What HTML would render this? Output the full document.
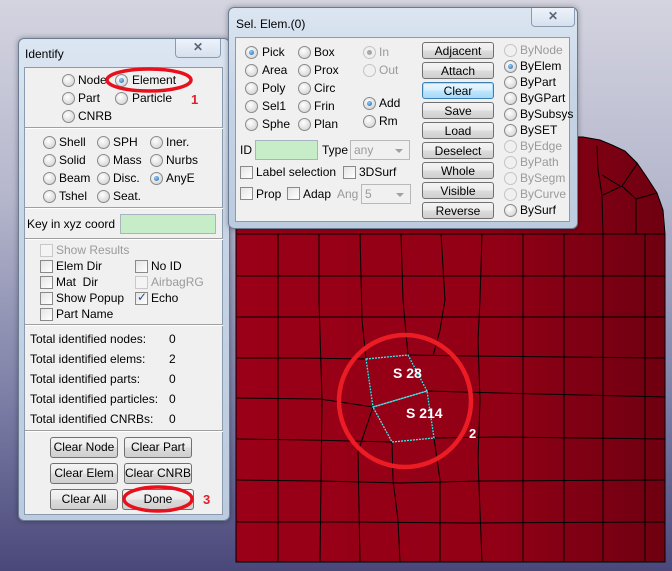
<!DOCTYPE html>
<html><head><meta charset="utf-8"><style>
*{margin:0;padding:0;box-sizing:border-box}
body{width:672px;height:571px;overflow:hidden;position:relative;font-family:"Liberation Sans",sans-serif;font-size:12px;color:#000;background:linear-gradient(180deg,#d4d4e0 0%,#b4b6cc 35%,#7c7ea6 70%,#4a487a 100%)}
.a{position:absolute;white-space:nowrap}
.win{position:absolute;border:1px solid #6b7c92;border-radius:6px;background:linear-gradient(180deg,#dce6f2,#c6d4e6 40%,#bccbdf);box-shadow:0 0 6px rgba(0,0,0,.35)}
.client{position:absolute;background:#f0f0f0;border:1px solid #8a9bb0}
.close{position:absolute;border:1px solid #8a9bb0;border-top:none;border-radius:0 0 4px 4px;background:linear-gradient(180deg,#eef3fa,#d6e1ee);color:#5a6678;font-weight:bold;font-size:12px;text-align:center;line-height:17px}
.r{position:absolute;width:13px;height:13px;border-radius:50%;border:1px solid #8a8a8a;background:radial-gradient(circle at 40% 35%,#fff,#e0e0e0 60%,#c8c8c8)}
.r.on::after{content:"";position:absolute;left:3px;top:3px;width:5px;height:5px;border-radius:50%;background:radial-gradient(circle at 40% 35%,#8fd0ff,#1c5fa8)}
.r.dis{border-color:#c4c4c4;background:#f0f0f0}
.r.dison::after{content:"";position:absolute;left:3px;top:3px;width:5px;height:5px;border-radius:50%;background:#a8a8a8}
.c{position:absolute;width:13px;height:13px;border:1px solid #8a8a8a;background:linear-gradient(135deg,#e4e4e4,#fff)}
.c.dis{border-color:#c8c8c8;background:#f4f4f4}
.t{position:absolute;white-space:nowrap;line-height:14px}
.g{color:#9a9a9a}
.sep{position:absolute;height:2px;border-top:1px solid #a0a0a0;border-bottom:1px solid #fff}
.b{position:absolute;border:1px solid #707070;border-radius:3px;background:linear-gradient(180deg,#f4f4f4 0%,#ebebeb 48%,#dcdcdc 52%,#cfcfcf 100%);text-align:center;line-height:16px;font-size:12px}
.b.f{border-color:#3c7fb1;background:linear-gradient(180deg,#eaf6fd 0%,#d9f0fc 48%,#bee6fd 52%,#a7d9f5 100%);box-shadow:inset 0 0 0 1px #9fe0ff}
.in{position:absolute;background:#c6ecc8;border:1px solid #a8b4c0}
.combo{position:absolute;border:1px solid #b8b8b8;background:#f0f0f0;color:#9a9a9a;padding-left:3px;line-height:18px}
.combo::after{content:"";position:absolute;right:6px;top:8px;border:4px solid transparent;border-top:4px solid #a0a0a0}
</style></head><body>

<svg class="a" style="left:0;top:0" width="672" height="571">
<defs><linearGradient id="m" x1="0" x2="1" y1="0" y2="0"><stop offset="0" stop-color="#9a0018"/><stop offset="0.6" stop-color="#920016"/><stop offset="1" stop-color="#6e0010"/></linearGradient></defs>
<path d="M236,133 L583,137 L600,140 L612,145 L625,151 L637,163 L646,176 L657,193 L663,210 L665,234 L665,562 L236,562 Z" fill="url(#m)" stroke="#000" stroke-width="1"/>
<g stroke="#000" stroke-width="1" fill="none">
<path d="M237,234H665M237,276H665M237,317H665"/>
<path d="M237,358 L300,358 L366,359 M408,355 L470,356 L665,358"/>
<path d="M237,398 L320,399 L373,407 M427,391 L500,393 L665,397"/>
<path d="M237,439 L310,440 L392,442 M434,438 L500,437 L665,439"/>
<path d="M237,480 L320,481 L400,483 L480,481 L665,480"/>
<path d="M237,522 L360,522 L470,523 L665,522"/>
<path d="M278,234V562M319,234 L319,300 L322,400 L320,562"/>
<path d="M360,234 L362,320 L366,359 L373,407 L358,452 L360,562"/>
<path d="M401,234 L403,300 L408,355 L427,391 L434,438 L440,480 L440,562"/>
<path d="M441,234 L445,300 L440,330 L433,356 M392,442 L393,480 L398,520 L400,562"/>
<path d="M482,234 L480,300 L478,340 L480,400 L478,460 L482,562"/>
<path d="M523,234V562M564,234V562M603,234V562"/>
<path d="M603,234 L602,195 L598,170 L597,146 M603,195 L622,186 L637,164 M602,175 L620,186"/>
<path d="M636,234 L636,199 L622,186 M636,199 L657,193 M645,234V562"/>
</g>
<g stroke="#3fe8e8" stroke-width="1.3" fill="none" stroke-dasharray="2,1">
<path d="M366,359 L408,355 L427,391 L373,407 Z"/>
<path d="M373,407 L427,391 L434,438 L392,442 Z"/>
</g>
<circle cx="405" cy="401" r="66" fill="none" stroke="#ec1c24" stroke-width="4.5"/>
<text x="393" y="378" fill="#fff" font-family="Liberation Sans" font-weight="bold" font-size="14">S 28</text>
<text x="406" y="418" fill="#fff" font-family="Liberation Sans" font-weight="bold" font-size="14">S 214</text>
<text x="469" y="438" fill="#fff" font-family="Liberation Sans" font-weight="bold" font-size="13">2</text>
</svg>

<div class="win" style="left:18px;top:38px;width:212px;height:483px">
<div class="close" style="left:156px;top:0;width:46px;height:19px">✕</div>
<div class="t" style="left:6px;top:8px;font-size:12px">Identify</div>
<div class="client" style="left:5px;top:28px;width:199px;height:448px"></div>
</div>
<div class="r" style="left:62px;top:74px"></div><div class="t" style="left:78px;top:73px">Node</div>
<div class="r on" style="left:115px;top:74px"></div><div class="t" style="left:132px;top:73px">Element</div>
<div class="r" style="left:62px;top:92px"></div><div class="t" style="left:78px;top:91px">Part</div>
<div class="r" style="left:115px;top:92px"></div><div class="t" style="left:132px;top:91px">Particle</div>
<div class="r" style="left:62px;top:110px"></div><div class="t" style="left:78px;top:109px">CNRB</div>
<svg class="a" style="left:104px;top:66px" width="92" height="30"><ellipse cx="45" cy="14" rx="42" ry="11" fill="none" stroke="#e8101c" stroke-width="3.5"/></svg>
<div class="t" style="left:191px;top:93px;color:#e0202a;font-weight:bold;font-size:13px">1</div>
<div class="sep" style="left:25px;top:127px;width:198px"></div>
<div class="r" style="left:43px;top:136px"></div><div class="t" style="left:59px;top:135px">Shell</div>
<div class="r" style="left:97px;top:136px"></div><div class="t" style="left:113px;top:135px">SPH</div>
<div class="r" style="left:150px;top:136px"></div><div class="t" style="left:166px;top:135px">Iner.</div>
<div class="r" style="left:43px;top:154px"></div><div class="t" style="left:59px;top:153px">Solid</div>
<div class="r" style="left:97px;top:154px"></div><div class="t" style="left:113px;top:153px">Mass</div>
<div class="r" style="left:150px;top:154px"></div><div class="t" style="left:166px;top:153px">Nurbs</div>
<div class="r" style="left:43px;top:172px"></div><div class="t" style="left:59px;top:171px">Beam</div>
<div class="r" style="left:97px;top:172px"></div><div class="t" style="left:113px;top:171px">Disc.</div>
<div class="r on" style="left:150px;top:172px"></div><div class="t" style="left:166px;top:171px">AnyE</div>
<div class="r" style="left:43px;top:190px"></div><div class="t" style="left:59px;top:189px">Tshel</div>
<div class="r" style="left:97px;top:190px"></div><div class="t" style="left:113px;top:189px">Seat.</div>
<div class="sep" style="left:25px;top:207px;width:198px"></div>
<div class="t" style="left:27px;top:217px">Key in xyz coord</div>
<div class="in" style="left:120px;top:214px;width:96px;height:20px"></div>
<div class="sep" style="left:25px;top:238px;width:198px"></div>
<div class="c dis" style="left:40px;top:244px"></div><div class="t g" style="left:56px;top:243px">Show Results</div>
<div class="c" style="left:40px;top:260px"></div><div class="t" style="left:56px;top:259px">Elem Dir</div>
<div class="c" style="left:135px;top:260px"></div><div class="t" style="left:151px;top:259px">No ID</div>
<div class="c" style="left:40px;top:276px"></div><div class="t" style="left:56px;top:275px">Mat&nbsp; Dir</div>
<div class="c dis" style="left:135px;top:276px"></div><div class="t g" style="left:151px;top:275px">AirbagRG</div>
<div class="c" style="left:40px;top:292px"></div><div class="t" style="left:56px;top:291px">Show Popup</div>
<div class="c" style="left:135px;top:292px"></div><div class="t" style="left:137px;top:290px;font-size:12px;color:#2a4a8a">✓</div><div class="t" style="left:151px;top:291px">Echo</div>
<div class="c" style="left:40px;top:308px"></div><div class="t" style="left:56px;top:307px">Part Name</div>
<div class="sep" style="left:25px;top:324px;width:198px"></div>
<div class="t" style="left:30px;top:332px">Total identified nodes:</div><div class="t" style="left:169px;top:332px">0</div>
<div class="t" style="left:30px;top:352px">Total identified elems:</div><div class="t" style="left:169px;top:352px">2</div>
<div class="t" style="left:30px;top:372px">Total identified parts:</div><div class="t" style="left:169px;top:372px">0</div>
<div class="t" style="left:30px;top:392px">Total identified particles:</div><div class="t" style="left:169px;top:392px">0</div>
<div class="t" style="left:30px;top:412px">Total identified CNRBs:</div><div class="t" style="left:169px;top:412px">0</div>
<div class="sep" style="left:25px;top:430px;width:198px"></div>
<div class="b" style="left:50px;top:437px;width:68px;height:21px;line-height:19px">Clear Node</div>
<div class="b" style="left:124px;top:437px;width:68px;height:21px;line-height:19px">Clear Part</div>
<div class="b" style="left:50px;top:463px;width:68px;height:21px;line-height:19px">Clear Elem</div>
<div class="b" style="left:124px;top:463px;width:68px;height:21px;line-height:19px">Clear CNRB</div>
<div class="b" style="left:50px;top:489px;width:68px;height:21px;line-height:19px">Clear All</div>
<div class="b" style="left:122px;top:489px;width:72px;height:21px;line-height:19px">Done</div>
<svg class="a" style="left:120px;top:483px" width="80" height="34"><ellipse cx="38" cy="16" rx="34" ry="12" fill="none" stroke="#e8101c" stroke-width="3.5"/></svg>
<div class="t" style="left:203px;top:493px;color:#e0202a;font-weight:bold;font-size:13px">3</div>

<div class="win" style="left:228px;top:7px;width:350px;height:222px">
<div class="close" style="left:302px;top:0;width:44px;height:19px">✕</div>
<div class="t" style="left:7px;top:9px">Sel. Elem.(0)</div>
<div class="client" style="left:6px;top:29px;width:335px;height:185px"></div>
</div>
<div class="r on" style="left:245px;top:46px"></div><div class="t" style="left:262px;top:45px">Pick</div>
<div class="r" style="left:245px;top:64px"></div><div class="t" style="left:262px;top:63px">Area</div>
<div class="r" style="left:245px;top:82px"></div><div class="t" style="left:262px;top:81px">Poly</div>
<div class="r" style="left:245px;top:100px"></div><div class="t" style="left:262px;top:99px">Sel1</div>
<div class="r" style="left:245px;top:118px"></div><div class="t" style="left:262px;top:117px">Sphe</div>
<div class="r" style="left:298px;top:46px"></div><div class="t" style="left:314px;top:45px">Box</div>
<div class="r" style="left:298px;top:64px"></div><div class="t" style="left:314px;top:63px">Prox</div>
<div class="r" style="left:298px;top:82px"></div><div class="t" style="left:314px;top:81px">Circ</div>
<div class="r" style="left:298px;top:100px"></div><div class="t" style="left:314px;top:99px">Frin</div>
<div class="r" style="left:298px;top:118px"></div><div class="t" style="left:314px;top:117px">Plan</div>
<div class="r dis dison" style="left:363px;top:46px"></div><div class="t g" style="left:379px;top:45px">In</div>
<div class="r dis" style="left:363px;top:64px"></div><div class="t g" style="left:379px;top:63px">Out</div>
<div class="r on" style="left:363px;top:97px"></div><div class="t" style="left:379px;top:96px">Add</div>
<div class="r" style="left:363px;top:115px"></div><div class="t" style="left:379px;top:114px">Rm</div>
<div class="t" style="left:240px;top:143px">ID</div>
<div class="in" style="left:255px;top:140px;width:63px;height:20px"></div>
<div class="t" style="left:322px;top:143px">Type</div>
<div class="combo" style="left:350px;top:140px;width:60px;height:20px">any</div>
<div class="c" style="left:240px;top:166px"></div><div class="t" style="left:256px;top:165px">Label selection</div>
<div class="c" style="left:343px;top:166px"></div><div class="t" style="left:359px;top:165px">3DSurf</div>
<div class="c" style="left:240px;top:187px"></div><div class="t" style="left:256px;top:187px">Prop</div>
<div class="c" style="left:287px;top:187px"></div><div class="t" style="left:303px;top:187px">Adap</div>
<div class="t g" style="left:337px;top:187px">Ang</div>
<div class="combo" style="left:361px;top:184px;width:50px;height:20px">5</div>
<div class="b" style="left:422px;top:42px;width:72px;height:17px">Adjacent</div>
<div class="b" style="left:422px;top:62px;width:72px;height:17px">Attach</div>
<div class="b f" style="left:422px;top:82px;width:72px;height:17px">Clear</div>
<div class="b" style="left:422px;top:102px;width:72px;height:17px">Save</div>
<div class="b" style="left:422px;top:122px;width:72px;height:17px">Load</div>
<div class="b" style="left:422px;top:142px;width:72px;height:17px">Deselect</div>
<div class="b" style="left:422px;top:162px;width:72px;height:17px">Whole</div>
<div class="b" style="left:422px;top:182px;width:72px;height:17px">Visible</div>
<div class="b" style="left:422px;top:202px;width:72px;height:17px">Reverse</div>
<div class="r dis" style="left:504px;top:44px"></div><div class="t g" style="left:520px;top:43px">ByNode</div>
<div class="r on" style="left:504px;top:60px"></div><div class="t" style="left:520px;top:59px">ByElem</div>
<div class="r" style="left:504px;top:76px"></div><div class="t" style="left:520px;top:75px">ByPart</div>
<div class="r" style="left:504px;top:92px"></div><div class="t" style="left:520px;top:91px">ByGPart</div>
<div class="r" style="left:504px;top:108px"></div><div class="t" style="left:520px;top:107px">BySubsys</div>
<div class="r" style="left:504px;top:124px"></div><div class="t" style="left:520px;top:123px">BySET</div>
<div class="r dis" style="left:504px;top:140px"></div><div class="t g" style="left:520px;top:139px">ByEdge</div>
<div class="r dis" style="left:504px;top:156px"></div><div class="t g" style="left:520px;top:155px">ByPath</div>
<div class="r dis" style="left:504px;top:172px"></div><div class="t g" style="left:520px;top:171px">BySegm</div>
<div class="r dis" style="left:504px;top:188px"></div><div class="t g" style="left:520px;top:187px">ByCurve</div>
<div class="r" style="left:504px;top:204px"></div><div class="t" style="left:520px;top:203px">BySurf</div>
</body></html>
